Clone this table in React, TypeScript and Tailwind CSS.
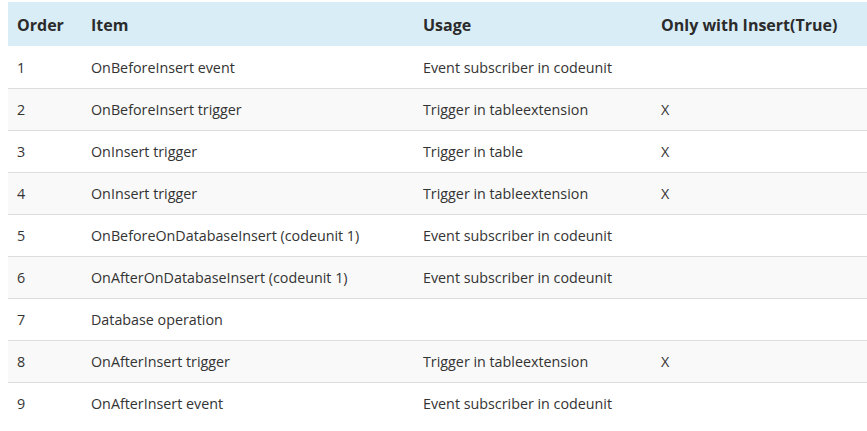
const rows: [string, string, string, string][] = [
  ["1", "OnBeforeInsert event", "Event subscriber in codeunit", ""],
  ["2", "OnBeforeInsert trigger", "Trigger in tableextension", "X"],
  ["3", "OnInsert trigger", "Trigger in table", "X"],
  ["4", "OnInsert trigger", "Trigger in tableextension", "X"],
  ["5", "OnBeforeOnDatabaseInsert (codeunit 1)", "Event subscriber in codeunit", ""],
  ["6", "OnAfterOnDatabaseInsert (codeunit 1)", "Event subscriber in codeunit", ""],
  ["7", "Database operation", "", ""],
  ["8", "OnAfterInsert trigger", "Trigger in tableextension", "X"],
  ["9", "OnAfterInsert event", "Event subscriber in codeunit", ""],
];

export default function App() {
  return (
    <div className="min-h-screen bg-white pl-2 pt-[2px] font-['Open_Sans',sans-serif] text-[14.3px] text-[#333]">
      <table className="w-full border-collapse text-left">
        <colgroup>
          <col className="w-[74px]" />
          <col className="w-[332px]" />
          <col className="w-[238px]" />
          <col />
        </colgroup>
        <thead>
          <tr className="h-[44px] bg-[#d9edf7] text-[16px]">
            <th className="px-[9px] pt-[2px] font-bold text-[#2b2b2b]">Order</th>
            <th className="px-[9px] pt-[2px] font-bold text-[#2b2b2b]">Item</th>
            <th className="px-[9px] pt-[2px] font-bold text-[#2b2b2b]">Usage</th>
            <th className="px-[9px] pt-[2px] font-bold text-[#2b2b2b]">Only with Insert(True)</th>
          </tr>
        </thead>
        <tbody>
          {rows.map((r, i) => (
            <tr
              key={r[0]}
              className={`h-[42px] ${i > 0 ? "border-t border-[#ddd]" : ""} ${i % 2 === 1 ? "bg-[#f9f9f9]" : "bg-white"}`}
            >
              {r.map((c, j) => (
                <td key={j} className="px-[9px] pt-[1px]">
                  {c}
                </td>
              ))}
            </tr>
          ))}
        </tbody>
      </table>
    </div>
  );
}
